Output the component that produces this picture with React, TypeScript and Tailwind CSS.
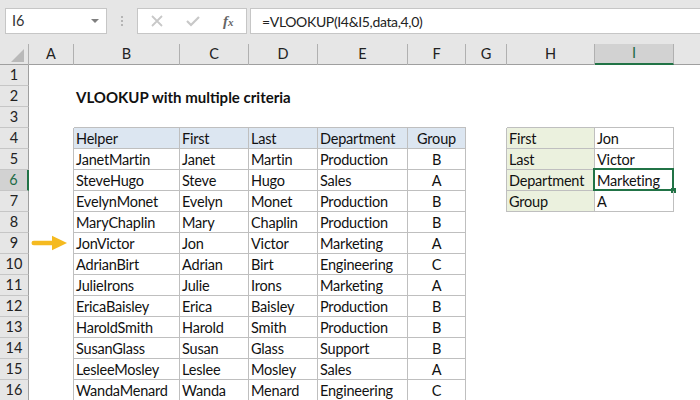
import React from "react";

const cols = ["A", "B", "C", "D", "E", "F", "G", "H", "I"];
const table = [
  ["Helper", "First", "Last", "Department", "Group"],
  ["JanetMartin", "Janet", "Martin", "Production", "B"],
  ["SteveHugo", "Steve", "Hugo", "Sales", "A"],
  ["EvelynMonet", "Evelyn", "Monet", "Production", "B"],
  ["MaryChaplin", "Mary", "Chaplin", "Production", "B"],
  ["JonVictor", "Jon", "Victor", "Marketing", "A"],
  ["AdrianBirt", "Adrian", "Birt", "Engineering", "C"],
  ["JulieIrons", "Julie", "Irons", "Marketing", "A"],
  ["EricaBaisley", "Erica", "Baisley", "Production", "B"],
  ["HaroldSmith", "Harold", "Smith", "Production", "B"],
  ["SusanGlass", "Susan", "Glass", "Support", "B"],
  ["LesleeMosley", "Leslee", "Mosley", "Sales", "A"],
  ["WandaMenard", "Wanda", "Menard", "Engineering", "C"],
];
const side: Record<number, [string, string]> = {
  4: ["First", "Jon"],
  5: ["Last", "Victor"],
  6: ["Department", "Marketing"],
  7: ["Group", "A"],
};
const gridCols = "grid grid-cols-[29px_45px_106px_69px_69px_90px_58px_41px_88px_79px_1fr] grid-rows-[21px]";
const txt = "text-[14.5px] leading-[22px] text-[#111] tracking-[-0.2px]";

function Row({ n }: { n: number }) {
  const t = n >= 4 ? table[n - 4] : null;
  const s = side[n];
  const isHead = n === 4;
  const sel = n === 6;
  const border = "border-b border-r border-[#bfbfbf]";
  const topLine = n === 3 ? "border-b border-[#bfbfbf]" : "";
  return (
    <div className={`${gridCols} h-[21px]`}>
      <div
        className={`flex items-center justify-center text-[14.5px] leading-none border-r border-b ${
          sel ? "bg-[#d2d2d2] text-[#1d6b46] border-r-[#217346] border-r-2" : "bg-[#e6e6e6] text-[#222] border-r-[#9f9f9f]"
        } border-b-[#c6c6c6]`}
      >
        {n}
      </div>
      <div className={t ? "border-r border-[#bfbfbf]" : ""} />
      {[0, 1, 2, 3, 4].map((i) =>
        t ? (
          <div
            key={i}
            className={`${border} ${isHead ? "bg-[#dce6f1]" : "bg-white"} ${
              i === 4 ? "text-center" : "pl-[2px]"
            } ${txt} whitespace-nowrap overflow-hidden`}
          >
            {t[i]}
          </div>
        ) : (
          <div key={i} className={`flex items-center ${topLine}`}>
            {n === 2 && i === 0 ? (
              <span className="pl-[2px] text-[15px] leading-[22px] font-bold text-[#111] whitespace-nowrap tracking-[0px]">
                VLOOKUP with multiple criteria
              </span>
            ) : null}
          </div>
        )
      )}
      <div className={s ? "border-r border-[#bfbfbf]" : ""} />
      {s ? (
        <>
          <div className={`${border} bg-[#ebf1de] pl-[2px] ${txt} whitespace-nowrap`}>{s[0]}</div>
          <div className={`${border} relative pl-[2px] ${txt} whitespace-nowrap`}>
            {s[1]}
            {sel ? (
              <>
                <div className="absolute left-[-2px] top-[-2px] right-[-1px] bottom-[-1px] border-2 border-[#217346]" />
                <div className="absolute right-[-3px] bottom-[-3px] w-[5px] h-[5px] bg-[#217346] box-content" />
              </>
            ) : null}
          </div>
        </>
      ) : (
        <>
          <div className={topLine} />
          <div className={topLine} />
        </>
      )}
      <div />
    </div>
  );
}

export default function App() {
  return (
    <div className="relative w-[700px] h-[400px] overflow-hidden bg-white font-['Lato','Liberation_Sans',sans-serif]">
      {/* Formula bar */}
      <div className="h-[44px] bg-[#e6e6e6] flex items-start pt-[8px] pl-[5px]">
        <div className="w-[102px] h-[26px] bg-white border border-[#c6c6c6] flex items-center justify-between pl-[6px] pr-[7px] text-[14.5px] text-[#333]">
          <span>I6</span>
          <svg width="8" height="4" viewBox="0 0 8 4"><path d="M0 0h8L4 4z" fill="#7f7f7f" /></svg>
        </div>
        <div className="w-[30px] h-[26px] flex flex-col items-center justify-center gap-[2px]">
          <span className="w-[2px] h-[2px] bg-[#b5b5b5]" />
          <span className="w-[2px] h-[2px] bg-[#b5b5b5]" />
          <span className="w-[2px] h-[2px] bg-[#b5b5b5]" />
        </div>
        <div className="w-[110px] h-[26px] bg-white border border-[#c6c6c6] flex items-center pl-[13px]">
          <svg width="12" height="12" viewBox="0 0 12 12" fill="none"><path d="M1 1l10 10M11 1L1 11" stroke="#c8c8c8" strokeWidth="1.8" /></svg>
          <svg className="ml-[23px]" width="14" height="12" viewBox="0 0 14 12" fill="none"><path d="M1 6l4 4 8-8" stroke="#c8c8c8" strokeWidth="2.2" /></svg>
          <span className="ml-[23px] font-['Liberation_Serif',serif] italic font-bold text-[15px] text-[#666] leading-none whitespace-nowrap">
            f<span className="text-[11px]">x</span>
          </span>
        </div>
        <div className="ml-[3px] flex-1 h-[26px] bg-white border-y border-l border-[#c6c6c6] flex items-center pl-[11px] text-[14px] tracking-[-0.35px] text-[#222]">
          =VLOOKUP(I4&amp;I5,data,4,0)
        </div>
      </div>

      {/* Column headers */}
      <div className={`${gridCols} h-[21px] bg-[#e6e6e6] border-b border-[#9f9f9f]`}>
        <div className="border-r border-[#b0b0b0] flex items-end justify-end pr-[4px] pb-[3px]">
          <svg width="13" height="13" viewBox="0 0 13 13"><path d="M13 0v13H0z" fill="#b9b9b9" /></svg>
        </div>
        {cols.map((c) => (
          <div
            key={c}
            className={`flex items-center justify-center text-[14.5px] leading-none border-r border-[#b0b0b0] ${
              c === "I" ? "bg-[#d2d2d2] text-[#1d6b46] border-b-2 border-b-[#217346]" : "text-[#222]"
            }`}
          >
            {c}
          </div>
        ))}
        <div />
      </div>

      {/* Rows */}
      {Array.from({ length: 16 }, (_, i) => (
        <Row key={i} n={i + 1} />
      ))}

      {/* Arrow */}
      <svg className="absolute left-[31px] top-[235px]" width="37" height="16" viewBox="0 0 37 16">
        <path d="M2.8 8h20" stroke="#f5ba20" strokeWidth="4.6" strokeLinecap="round" />
        <path d="M21 0.7L36 8 21 15.3z" fill="#f5ba20" />
      </svg>
    </div>
  );
}
